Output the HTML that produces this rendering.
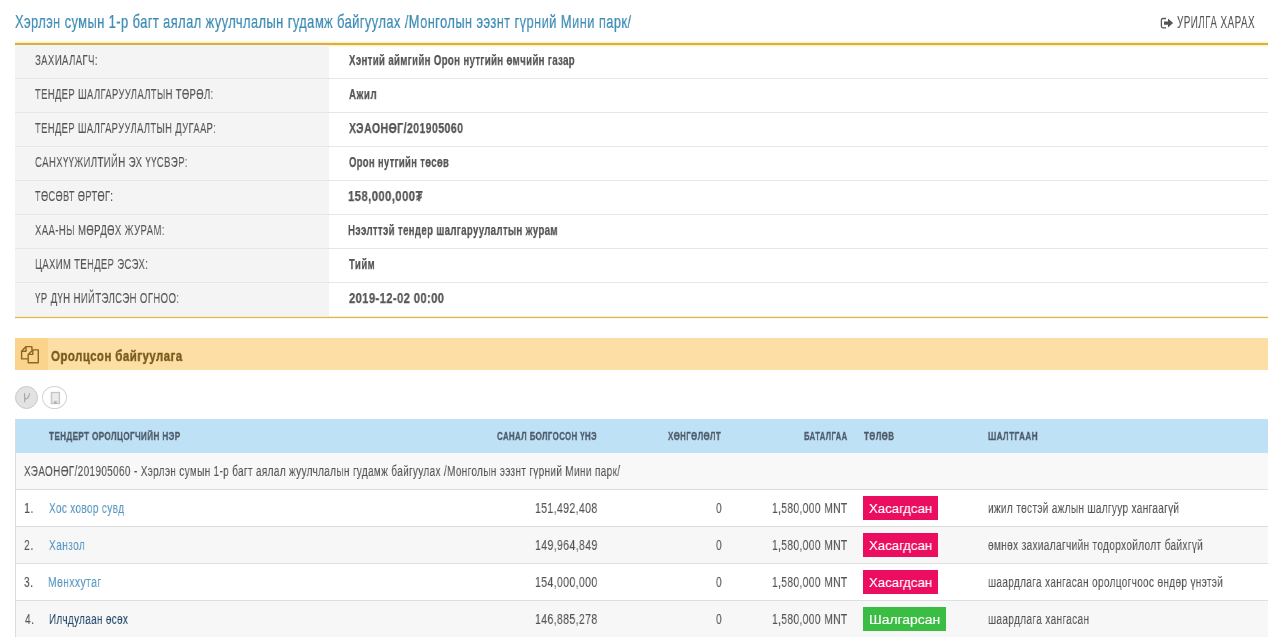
<!DOCTYPE html>
<html><head><meta charset="utf-8">
<style>
html,body{margin:0;padding:0;background:#fff;width:1268px;height:637px;overflow:hidden;position:relative}
body{font-family:"Liberation Sans",sans-serif}
.t{position:absolute;white-space:pre;line-height:1;transform-origin:0 0;will-change:transform;-webkit-text-stroke:0.1px currentColor}
.b{position:absolute}
</style></head><body>
<!-- info table -->
<div class="b" style="left:15px;top:41px;width:1253px;height:6px;background:linear-gradient(#fffdf0 0,#fff6c4 1px,#fff2b0 2px,#d8ad4c 2px,#d6ac4a 4px,#fcf3c0 4px,#fffbe8 6px)"></div>
<div class="b" style="left:15px;top:45px;width:314px;height:272px;background:#f4f4f4"></div>
<div class="b" style="left:15px;top:78px;width:1253px;height:1px;background:#e6e6e6"></div>
<div class="b" style="left:15px;top:112px;width:1253px;height:1px;background:#e6e6e6"></div>
<div class="b" style="left:15px;top:146px;width:1253px;height:1px;background:#e6e6e6"></div>
<div class="b" style="left:15px;top:180px;width:1253px;height:1px;background:#e6e6e6"></div>
<div class="b" style="left:15px;top:214px;width:1253px;height:1px;background:#e6e6e6"></div>
<div class="b" style="left:15px;top:248px;width:1253px;height:1px;background:#e6e6e6"></div>
<div class="b" style="left:15px;top:282px;width:1253px;height:1px;background:#e6e6e6"></div>

<div class="b" style="left:15px;top:316px;width:1253px;height:1px;background:#fcefbc"></div><div class="b" style="left:15px;top:317px;width:1253px;height:1px;background:#d8b466"></div><div class="b" style="left:15px;top:318px;width:1253px;height:1px;background:#fdf9e4"></div>
<!-- panel -->
<div class="b" style="left:15px;top:338px;width:1253px;height:32px;background:#fddfa6"></div>
<div class="b" style="left:15px;top:338px;width:33px;height:32px;background:#fbd38b"></div>
<svg class="b" style="left:15px;top:338px" width="33" height="32" viewBox="0 0 33 32">
<g fill="none" stroke="#8a6726" stroke-width="1.4" stroke-linejoin="round">
<path d="M11 8.6 H16.9 V11.9 M11 8.6 L6.6 13.2 V20.9 H13.2"/>
<path d="M11 8.6 V13.2 H6.6"/>
<path d="M17.8 11.9 H23.3 V24.7 H13.2 V16.4 Z"/>
<path d="M17.8 11.9 V16.4 H13.2"/>
</g></svg>
<!-- buttons -->
<div class="b" style="left:15px;top:386px;width:21px;height:21px;border-radius:50%;background:#e2e2e2;border:1.2px solid #c9c9c9"></div>
<div class="b" style="left:42px;top:386px;width:23px;height:21px;border-radius:50%;background:#fff;border:1.2px solid #d3d3d3"></div>
<svg class="b" style="left:12px;top:382px" width="60" height="30" viewBox="0 0 60 30">
<path d="M12.6 11.3 V20.3 M12.6 16.8 Q16.5 17.5 17.6 11.3" fill="none" stroke="#a9a9a9" stroke-width="1.2"/>
<rect x="39.3" y="10.4" width="8.2" height="11.2" fill="#e2e2e2" stroke="#c2c2c2" stroke-width="1.1"/>
<path d="M41 12.8 H45.8 M41 15 H45.8 M41 17.2 H45.8" stroke="#f6f6f6" stroke-width="1"/>
<path d="M42.2 21.6 V19.4 H44.6 V21.6" fill="#a8a8a8" stroke="none"/>
</svg>
<!-- link icon -->
<svg class="b" style="left:1156px;top:10px" width="30" height="25" viewBox="0 0 30 25">
<path d="M10 8.5 H7 Q5.4 8.5 5.4 10.1 V16.3 Q5.4 17.9 7 17.9 H10" fill="none" stroke="#5a5a5a" stroke-width="1.3"/>
<path d="M8 11.4 H12 V8.4 L17.1 13 L12 17.5 V14.7 H8 Z" fill="#555"/>
</svg>
<!-- table -->
<div class="b" style="left:15px;top:419px;width:1253px;height:34px;background:#bfe1f6"></div>
<div class="b" style="left:15px;top:453px;width:1253px;height:36px;background:#f8f8f8"></div>
<div class="b" style="left:15px;top:419px;width:1px;height:218px;background:#dcdcdc"></div>
<div class="b" style="left:16px;top:489px;width:1252px;height:1px;background:#dedede"></div>
<div class="b" style="left:863px;top:496px;width:75px;height:23.6px;background:#eb0d60"></div>
<div class="b" style="left:16px;top:526px;width:1252px;height:1px;background:#dedede"></div>
<div class="b" style="left:16px;top:527px;width:1252px;height:36px;background:#f7f7f7"></div>
<div class="b" style="left:863px;top:533px;width:75px;height:23.6px;background:#eb0d60"></div>
<div class="b" style="left:16px;top:563px;width:1252px;height:1px;background:#dedede"></div>
<div class="b" style="left:863px;top:570px;width:75px;height:23.6px;background:#eb0d60"></div>
<div class="b" style="left:16px;top:600px;width:1252px;height:1px;background:#dedede"></div>
<div class="b" style="left:16px;top:601px;width:1252px;height:36px;background:#f7f7f7"></div>
<div class="b" style="left:863px;top:607px;width:83px;height:23.6px;background:#3bbc42"></div>

<div class="t" style="left:15.44px;top:13.29px;font-size:18.31px;font-weight:400;color:#3b8ab4;transform:scaleX(0.7043);letter-spacing:0.597px;-webkit-text-stroke:0.2px currentColor">Хэрлэн сумын 1-р багт аялал жуулчлалын гудамж байгуулах /Монголын ээзнт гүрний Мини парк/</div>
<div class="t" style="left:1177.20px;top:14.24px;font-size:16.13px;font-weight:400;color:#555555;transform:scaleX(0.6146);letter-spacing:0.686px;">УРИЛГА ХАРАХ</div>
<div class="t" style="left:35.01px;top:52.81px;font-size:14.10px;font-weight:400;color:#555555;transform:scaleX(0.6781);letter-spacing:0.604px;">ЗАХИАЛАГЧ:</div>
<div class="t" style="left:348.90px;top:52.76px;font-size:14.10px;font-weight:700;color:#555555;transform:scaleX(0.6838);letter-spacing:0.507px;-webkit-text-stroke:0.25px currentColor">Хэнтий аймгийн Орон нутгийн өмчийн газар</div>
<div class="t" style="left:35.11px;top:86.81px;font-size:14.10px;font-weight:400;color:#555555;transform:scaleX(0.6663);letter-spacing:0.591px;">ТЕНДЕР ШАЛГАРУУЛАЛТЫН ТӨРӨЛ:</div>
<div class="t" style="left:348.71px;top:86.76px;font-size:14.10px;font-weight:700;color:#555555;transform:scaleX(0.6857);letter-spacing:0.779px;-webkit-text-stroke:0.25px currentColor">Ажил</div>
<div class="t" style="left:35.11px;top:120.81px;font-size:14.10px;font-weight:400;color:#555555;transform:scaleX(0.6649);letter-spacing:0.579px;">ТЕНДЕР ШАЛГАРУУЛАЛТЫН ДУГААР:</div>
<div class="t" style="left:348.90px;top:120.76px;font-size:14.10px;font-weight:700;color:#555555;transform:scaleX(0.7459);letter-spacing:0.571px;-webkit-text-stroke:0.25px currentColor">ХЭАОНӨГ/201905060</div>
<div class="t" style="left:34.82px;top:154.81px;font-size:14.10px;font-weight:400;color:#555555;transform:scaleX(0.6784);letter-spacing:0.581px;">САНХҮҮЖИЛТИЙН ЭХ ҮҮСВЭР:</div>
<div class="t" style="left:348.52px;top:154.76px;font-size:14.10px;font-weight:700;color:#555555;transform:scaleX(0.6688);letter-spacing:0.523px;-webkit-text-stroke:0.25px currentColor">Орон нутгийн төсөв</div>
<div class="t" style="left:35.12px;top:188.81px;font-size:14.10px;font-weight:400;color:#555555;transform:scaleX(0.6508);letter-spacing:0.591px;">ТӨСӨВТ ӨРТӨГ:</div>
<div class="t" style="left:348.22px;top:188.76px;font-size:14.10px;font-weight:700;color:#555555;transform:scaleX(0.8041);letter-spacing:0.500px;-webkit-text-stroke:0.25px currentColor">158,000,000₮</div>
<div class="t" style="left:35.11px;top:222.81px;font-size:14.10px;font-weight:400;color:#555555;transform:scaleX(0.6751);letter-spacing:0.601px;">ХАА-НЫ МӨРДӨХ ЖУРАМ:</div>
<div class="t" style="left:348.32px;top:222.76px;font-size:14.10px;font-weight:700;color:#555555;transform:scaleX(0.6819);letter-spacing:0.524px;-webkit-text-stroke:0.25px currentColor">Нээлттэй тендер шалгаруулалтын журам</div>
<div class="t" style="left:34.55px;top:256.81px;font-size:14.10px;font-weight:400;color:#555555;transform:scaleX(0.6689);letter-spacing:0.587px;">ЦАХИМ ТЕНДЕР ЭСЭХ:</div>
<div class="t" style="left:348.80px;top:256.76px;font-size:14.10px;font-weight:700;color:#555555;transform:scaleX(0.6769);letter-spacing:0.739px;-webkit-text-stroke:0.25px currentColor">Тийм</div>
<div class="t" style="left:35.30px;top:290.81px;font-size:14.10px;font-weight:400;color:#555555;transform:scaleX(0.6789);letter-spacing:0.575px;">ҮР ДҮН НИЙТЭЛСЭН ОГНОО:</div>
<div class="t" style="left:348.56px;top:290.76px;font-size:14.10px;font-weight:700;color:#555555;transform:scaleX(0.7974);letter-spacing:0.473px;-webkit-text-stroke:0.25px currentColor">2019-12-02 00:00</div>
<div class="t" style="left:50.64px;top:347.73px;font-size:15.55px;font-weight:700;color:#7a5a1c;transform:scaleX(0.7392);letter-spacing:0.590px;-webkit-text-stroke:0.4px currentColor">Оролцсон байгуулага</div>
<div class="t" style="left:49.42px;top:431.20px;font-size:11.34px;font-weight:700;color:#4d5b69;transform:scaleX(0.7194);letter-spacing:0.496px;-webkit-text-stroke:0.3px currentColor">ТЕНДЕРТ ОРОЛЦОГЧИЙН НЭР</div>
<div class="t" style="left:497.08px;top:431.20px;font-size:11.34px;font-weight:700;color:#4d5b69;transform:scaleX(0.6991);letter-spacing:0.500px;-webkit-text-stroke:0.3px currentColor">САНАЛ БОЛГОСОН ҮНЭ</div>
<div class="t" style="left:668.20px;top:431.20px;font-size:11.34px;font-weight:700;color:#4d5b69;transform:scaleX(0.6932);letter-spacing:0.570px;-webkit-text-stroke:0.3px currentColor">ХӨНГӨЛӨЛТ</div>
<div class="t" style="left:804.04px;top:431.20px;font-size:11.34px;font-weight:700;color:#4d5b69;transform:scaleX(0.6773);letter-spacing:0.538px;-webkit-text-stroke:0.3px currentColor">БАТАЛГАА</div>
<div class="t" style="left:864.02px;top:431.20px;font-size:11.34px;font-weight:700;color:#4d5b69;transform:scaleX(0.6936);letter-spacing:0.640px;-webkit-text-stroke:0.3px currentColor">ТӨЛӨВ</div>
<div class="t" style="left:987.81px;top:431.20px;font-size:11.34px;font-weight:700;color:#4d5b69;transform:scaleX(0.7181);letter-spacing:0.579px;-webkit-text-stroke:0.3px currentColor">ШАЛТГААН</div>
<div class="t" style="left:23.90px;top:463.72px;font-size:14.39px;font-weight:400;color:#555555;transform:scaleX(0.6969);letter-spacing:0.475px;">ХЭАОНӨГ/201905060 - Хэрлэн сумын 1-р багт аялал жуулчлалын гудамж байгуулах /Монголын ээзнт гүрний Мини парк/</div>
<div class="t" style="left:24.04px;top:500.72px;font-size:14.39px;font-weight:400;color:#555555;transform:scaleX(0.7536);letter-spacing:0.621px;">1.</div>
<div class="t" style="left:49.10px;top:500.72px;font-size:14.39px;font-weight:400;color:#5797c0;transform:scaleX(0.6956);letter-spacing:0.496px;">Хос ховор сувд</div>
<div class="t" style="left:534.56px;top:500.72px;font-size:14.39px;font-weight:400;color:#555555;transform:scaleX(0.7317);letter-spacing:0.501px;">151,492,408</div>
<div class="t" style="left:715.99px;top:500.72px;font-size:14.39px;font-weight:400;color:#555555;transform:scaleX(0.7199);letter-spacing:0.450px;">0</div>
<div class="t" style="left:772.18px;top:500.72px;font-size:14.39px;font-weight:400;color:#555555;transform:scaleX(0.7136);letter-spacing:0.521px;">1,580,000 MNT</div>
<div class="t" style="left:988.20px;top:500.72px;font-size:14.39px;font-weight:400;color:#555555;transform:scaleX(0.6969);letter-spacing:0.481px;">ижил төстэй ажлын шалгуур хангаагүй</div>
<div class="t" style="left:869.34px;top:501.80px;font-size:13.23px;font-weight:400;color:#ffffff;transform:scaleX(0.9955);letter-spacing:0.000px;-webkit-text-stroke:0.15px currentColor">Хасагдсан</div>
<div class="t" style="left:24.27px;top:537.72px;font-size:14.39px;font-weight:400;color:#555555;transform:scaleX(0.7319);letter-spacing:0.639px;">2.</div>
<div class="t" style="left:49.10px;top:537.72px;font-size:14.39px;font-weight:400;color:#5797c0;transform:scaleX(0.7040);letter-spacing:0.598px;">Ханзол</div>
<div class="t" style="left:534.56px;top:537.72px;font-size:14.39px;font-weight:400;color:#555555;transform:scaleX(0.7330);letter-spacing:0.500px;">149,964,849</div>
<div class="t" style="left:715.99px;top:537.72px;font-size:14.39px;font-weight:400;color:#555555;transform:scaleX(0.7199);letter-spacing:0.450px;">0</div>
<div class="t" style="left:772.18px;top:537.72px;font-size:14.39px;font-weight:400;color:#555555;transform:scaleX(0.7136);letter-spacing:0.521px;">1,580,000 MNT</div>
<div class="t" style="left:988.40px;top:537.72px;font-size:14.39px;font-weight:400;color:#555555;transform:scaleX(0.7011);letter-spacing:0.482px;">өмнөх захиалагчийн тодорхойлолт байхгүй</div>
<div class="t" style="left:869.34px;top:538.80px;font-size:13.23px;font-weight:400;color:#ffffff;transform:scaleX(0.9955);letter-spacing:0.000px;-webkit-text-stroke:0.15px currentColor">Хасагдсан</div>
<div class="t" style="left:24.49px;top:574.72px;font-size:14.39px;font-weight:400;color:#555555;transform:scaleX(0.7115);letter-spacing:0.658px;">3.</div>
<div class="t" style="left:48.47px;top:574.72px;font-size:14.39px;font-weight:400;color:#5797c0;transform:scaleX(0.7221);letter-spacing:0.540px;">Мөнххутаг</div>
<div class="t" style="left:534.56px;top:574.72px;font-size:14.39px;font-weight:400;color:#555555;transform:scaleX(0.7317);letter-spacing:0.501px;">154,000,000</div>
<div class="t" style="left:715.99px;top:574.72px;font-size:14.39px;font-weight:400;color:#555555;transform:scaleX(0.7199);letter-spacing:0.450px;">0</div>
<div class="t" style="left:772.18px;top:574.72px;font-size:14.39px;font-weight:400;color:#555555;transform:scaleX(0.7136);letter-spacing:0.521px;">1,580,000 MNT</div>
<div class="t" style="left:988.20px;top:574.72px;font-size:14.39px;font-weight:400;color:#555555;transform:scaleX(0.6982);letter-spacing:0.478px;">шаардлага хангасан оролцогчоос өндөр үнэтэй</div>
<div class="t" style="left:869.34px;top:575.80px;font-size:13.23px;font-weight:400;color:#ffffff;transform:scaleX(0.9955);letter-spacing:0.000px;-webkit-text-stroke:0.15px currentColor">Хасагдсан</div>
<div class="t" style="left:24.60px;top:611.72px;font-size:14.39px;font-weight:400;color:#555555;transform:scaleX(0.7017);letter-spacing:0.667px;">4.</div>
<div class="t" style="left:48.51px;top:611.72px;font-size:14.39px;font-weight:400;color:#264a6b;transform:scaleX(0.6875);letter-spacing:0.524px;">Илчдулаан өсөх</div>
<div class="t" style="left:534.56px;top:611.72px;font-size:14.39px;font-weight:400;color:#555555;transform:scaleX(0.7317);letter-spacing:0.501px;">146,885,278</div>
<div class="t" style="left:715.99px;top:611.72px;font-size:14.39px;font-weight:400;color:#555555;transform:scaleX(0.7199);letter-spacing:0.450px;">0</div>
<div class="t" style="left:772.18px;top:611.72px;font-size:14.39px;font-weight:400;color:#555555;transform:scaleX(0.7136);letter-spacing:0.521px;">1,580,000 MNT</div>
<div class="t" style="left:988.20px;top:611.72px;font-size:14.39px;font-weight:400;color:#555555;transform:scaleX(0.6995);letter-spacing:0.504px;">шаардлага хангасан</div>
<div class="t" style="left:869.19px;top:612.80px;font-size:13.23px;font-weight:400;color:#ffffff;transform:scaleX(1.0511);letter-spacing:0.000px;-webkit-text-stroke:0.15px currentColor">Шалгарсан</div>
</body></html>
